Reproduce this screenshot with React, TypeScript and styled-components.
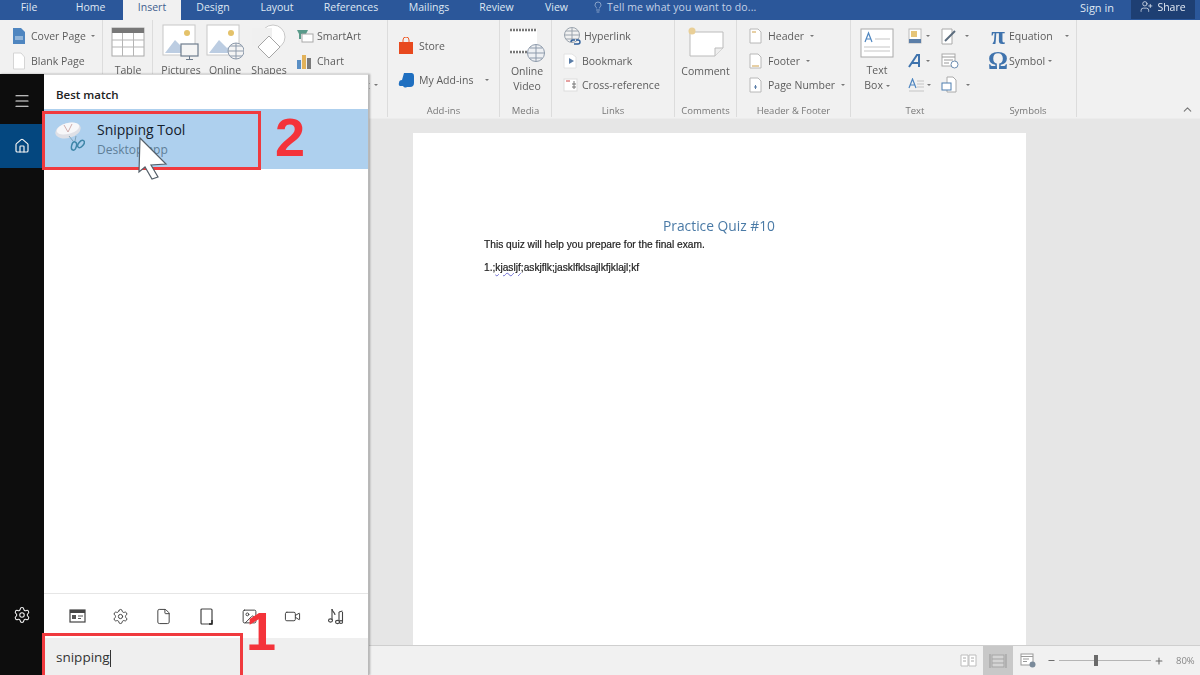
import React from "react";
import styled, { createGlobalStyle } from "styled-components";
import { Menu, Home, Settings, File, Image, Video, Lightbulb, UserPlus, ChevronUp, Minus, Plus } from "lucide-react";

const GlobalStyle = createGlobalStyle`
  html, body { margin: 0; padding: 0; background: #e6e6e6; }
  * { box-sizing: border-box; }
`;

const Page = styled.div`
  position: relative;
  width: 1200px;
  height: 675px;
  overflow: hidden;
  display: flex;
  flex-direction: column;
  font-family: "Open Sans", "Liberation Sans", sans-serif;
  color: #555;
  filter: blur(0.35px);
`;

const TabBar = styled.div`
  height: 20px;
  flex: none;
  background: #2b579a;
  display: flex;
  align-items: stretch;
`;

const Tab = styled.div<{ $w: number; $active?: boolean }>`
  width: ${(p) => p.$w}px;
  display: flex;
  align-items: center;
  justify-content: center;
  padding-bottom: 6px;
  font-size: 10.5px;
  color: ${(p) => (p.$active ? "#3f5f8f" : "#dfe7f3")};
  background: ${(p) => (p.$active ? "#f1f1f1" : "transparent")};
`;

const TellMe = styled.div`
  display: flex;
  align-items: center;
  gap: 3px;
  margin-left: 7px;
  padding-bottom: 6px;
  font-size: 10.5px;
  letter-spacing: 0.1px;
  color: #c3d1e6;
`;

const Spacer = styled.div`
  flex: 1;
`;

const SignIn = styled.div`
  display: flex;
  align-items: center;
  margin-right: 17px;
  padding-bottom: 6px;
  font-size: 11px;
  color: #dfe7f3;
`;

const ShareBox = styled.div`
  width: 64px;
  height: 19px;
  margin-right: 5px;
  padding-bottom: 6px;
  background: #1e3f73;
  display: flex;
  align-items: center;
  justify-content: center;
  gap: 4px;
  font-size: 10.5px;
  color: #e6ecf5;
`;

const Ribbon = styled.div`
  height: 98px;
  flex: none;
  background: #f1f1f1;
  display: flex;
  position: relative;
`;

const Group = styled.section<{ $w: number; $noLine?: boolean }>`
  width: ${(p) => p.$w}px;
  flex: none;
  display: flex;
  flex-direction: column;
  padding-top: 4px;
  margin: 0;
  border-right: 1px solid ${(p) => (p.$noLine ? "transparent" : "#dcdcdc")};
  height: 97px;
`;

const GroupBody = styled.div<{ $pad?: number; $gap?: number }>`
  flex: 1;
  display: flex;
  padding-left: ${(p) => p.$pad ?? 0}px;
  gap: ${(p) => p.$gap ?? 0}px;
`;

const GroupLabel = styled.div`
  height: 12px;
  line-height: 12px;
  text-align: center;
  font-size: 9.5px;
  color: #777;
`;

const Col = styled.div<{ $top?: number; $gap?: number; $ml?: number }>`
  display: flex;
  flex-direction: column;
  padding-top: ${(p) => p.$top ?? 0}px;
  gap: ${(p) => p.$gap ?? 0}px;
  margin-left: ${(p) => p.$ml ?? 0}px;
`;

const SmallBtn = styled.div<{ $gap?: number; $pad?: number }>`
  height: 24.4px;
  display: flex;
  align-items: center;
  gap: ${(p) => p.$gap ?? 3}px;
  padding-left: ${(p) => p.$pad ?? 0}px;
  font-size: 10.5px;
  color: #5c5c5c;
  white-space: nowrap;
`;

const LargeBtn = styled.div<{ $w: number; $top?: number }>`
  width: ${(p) => p.$w}px;
  display: flex;
  flex-direction: column;
  align-items: center;
  padding-top: ${(p) => p.$top ?? 0}px;
  font-size: 10.5px;
  line-height: 15px;
  color: #5c5c5c;
  text-align: center;
`;

const BtnLabel = styled.span<{ $mt?: number }>`
  margin-top: ${(p) => p.$mt ?? 0}px;
`;

const Caret = styled.span<{ $gap?: number }>`
  width: 0;
  height: 0;
  margin-left: ${(p) => p.$gap ?? 0}px;
  border-left: 2px solid transparent;
  border-right: 2px solid transparent;
  border-top: 2px solid #777;
  display: inline-block;
  vertical-align: middle;
`;

const Collapse = styled.div`
  position: absolute;
  right: 6px;
  bottom: 2px;
  color: #777;
  display: flex;
`;

const DocArea = styled.div`
  flex: 1;
  min-height: 0;
  background: #e6e6e6;
  padding: 14px 0 0 413px;
  border-top: 1px solid #ececec;
`;

const Sheet = styled.div`
  width: 613px;
  height: 100%;
  background: #fff;
  padding: 84px 72px 0 71px;
  color: #222;
  font-family: "Liberation Sans", Carlito, sans-serif;
`;

const DocTitle = styled.div`
  font-family: "Open Sans", sans-serif;
  text-align: center;
  font-size: 13.8px;
  line-height: 18px;
  color: #4a7aa6;
`;

const DocLine = styled.div<{ $mt: number }>`
  margin-top: ${(p) => p.$mt}px;
  font-size: 10.2px;
  line-height: 12px;
  -webkit-text-stroke: 0.2px #222;
`;

const Squiggle = styled.span`
  text-decoration: underline wavy #6b6bd0 1px;
`;

const StatusBar = styled.div`
  height: 30px;
  flex: none;
  background: #f1f1f1;
  border-top: 1px solid #cfcfcf;
  display: flex;
  align-items: stretch;
  justify-content: flex-end;
  color: #6a6a6a;
`;

const ViewBtn = styled.div<{ $w: number; $active?: boolean }>`
  width: ${(p) => p.$w}px;
  display: flex;
  align-items: center;
  justify-content: center;
  background: ${(p) => (p.$active ? "#c8c8c8" : "transparent")};
`;

const Zoomer = styled.div`
  display: flex;
  align-items: center;
  width: 129px;
  gap: 3px;
  margin-left: 4px;
`;

const SliderTrack = styled.div`
  position: relative;
  width: 92px;
  height: 1px;
  background: #b5b5b5;
`;

const SliderThumb = styled.div`
  position: absolute;
  left: 35px;
  top: -5px;
  width: 4px;
  height: 11px;
  background: #6a6a6a;
`;

const ZoomValue = styled.div`
  width: 24px;
  display: flex;
  align-items: center;
  font-size: 9.5px;
  color: #888;
`;

/* Start menu, floats over the word window */
const StartMenu = styled.div`
  position: absolute;
  left: 0;
  top: 74px;
  bottom: 0;
  width: 369px;
  display: flex;
  box-shadow: 1px 0 2px rgba(0, 0, 0, 0.3);
`;

const Rail = styled.div`
  width: 44px;
  flex: none;
  background: #0d0d0d;
  color: #f2f2f2;
  display: flex;
  flex-direction: column;
  align-items: stretch;
`;

const RailBtn = styled.div<{ $h: number; $active?: boolean; $top?: number }>`
  height: ${(p) => p.$h}px;
  padding-top: ${(p) => p.$top ?? 0}px;
  display: flex;
  align-items: center;
  justify-content: center;
  background: ${(p) => (p.$active ? "#04477f" : "transparent")};
`;

const Panel = styled.div`
  flex: 1;
  background: #fff;
  display: flex;
  flex-direction: column;
  border-top: 1px solid #d8d8d8;
  border-right: 1px solid #b9b9b9;
`;

const PanelHead = styled.div`
  height: 34px;
  flex: none;
  padding: 11px 0 0 12px;
  font-size: 11.5px;
  font-weight: 600;
  line-height: 17px;
  color: #222;
`;

const ResultRow = styled.div`
  height: 60px;
  flex: none;
  background: #aed0ee;
  display: flex;
  padding: 10px 0 0 11px;
  gap: 12px;
`;

const SnipBox = styled.div`
  padding-top: 2px;
  display: flex;
`;

const ResultText = styled.div`
  display: flex;
  flex-direction: column;
`;

const ResultName = styled.div`
  font-size: 14px;
  line-height: 22px;
  color: #14202c;
  font-weight: 500;
`;

const ResultSub = styled.div`
  font-size: 12px;
  line-height: 17px;
  color: #5f7f98;
`;

const PanelGap = styled.div`
  flex: 1;
`;

const FilterRow = styled.div`
  height: 45px;
  flex: none;
  border-top: 1px solid #e6e6e6;
  display: flex;
  align-items: center;
  padding-left: 22px;
  gap: 21px;
  color: #444;
`;

const FilterIcon = styled.div`
  width: 22px;
  display: flex;
  justify-content: center;
`;

const SearchBox = styled.div`
  height: 37px;
  flex: none;
  background: #efefef;
  padding: 9px 0 0 12px;
  font-size: 13.5px;
  line-height: 20px;
  color: #333;
  display: flex;
  align-items: flex-start;
`;

const Caretline = styled.span`
  width: 1px;
  height: 17px;
  margin-top: 3px;
  background: #333;
`;

const RedBox = styled.div<{ $l: number; $t: number; $w: number; $h: number }>`
  position: absolute;
  left: ${(p) => p.$l}px;
  top: ${(p) => p.$t}px;
  width: ${(p) => p.$w}px;
  height: ${(p) => p.$h}px;
  border: 3px solid #f03a3e;
`;

const RedNumber = styled.div<{ $l: number; $t: number }>`
  position: absolute;
  left: ${(p) => p.$l}px;
  top: ${(p) => p.$t}px;
  font-family: "Liberation Sans", Arial, sans-serif;
  font-weight: 700;
  font-size: 54px;
  line-height: 54px;
  color: #f4333a;
`;

const CursorWrap = styled.svg`
  position: absolute;
  left: 138px;
  top: 137px;
`;

const CoverIcon = () => (
  <svg width="14" height="18" viewBox="0 0 14 18">
    <path d="M1 1h8l4 4v12H1z" fill="#4f86c0" />
    <path d="M3 10h8M3 12h8" stroke="#d6e4f2" strokeWidth="1" />
  </svg>
);
const BlankIcon = () => (
  <svg width="14" height="18" viewBox="0 0 14 18">
    <path d="M1.5 1h7.5l3.5 4v12h-11z" fill="#fff" stroke="#d5d5d5" />
  </svg>
);
const TableIcon = () => (
  <svg width="34" height="30" viewBox="0 0 34 30">
    <rect x="1" y="1" width="32" height="28" fill="#fff" stroke="#aaa" />
    <rect x="1" y="1" width="32" height="5" fill="#777" />
    <path d="M1 13h32M1 20h32M11.5 6v23M22.5 6v23" stroke="#b5b5b5" fill="none" />
  </svg>
);
const PictureIcon = ({ web }: { web?: boolean }) => (
  <svg width="38" height="36" viewBox="0 0 38 36">
    <rect x="1" y="1" width="32" height="30" fill="#fff" stroke="#c8c8c8" />
    <circle cx="25" cy="9" r="3" fill="#e4c26a" />
    <path d="M3 29l10-13 8 8 4-3 6 8z" fill="#bccde2" />
    {web ? (
      <g fill="#f4f4f4" stroke="#8d9aab">
        <circle cx="30" cy="27" r="8" />
        <path d="M22 27h16M30 19v16M24 22h12M24 32h12" fill="none" />
      </g>
    ) : (
      <g>
        <rect x="19" y="20" width="17" height="12" fill="#f5f5f5" stroke="#6e7d8e" strokeWidth="1.2" />
        <path d="M27.5 32v3M24 35.5h7" stroke="#6e7d8e" />
      </g>
    )}
  </svg>
);
const ShapesIcon = () => (
  <svg width="36" height="36" viewBox="0 0 36 36">
    <circle cx="22" cy="13" r="12" fill="#fff" stroke="#c8c8c8" />
    <rect x="1" y="4" width="20" height="18" fill="#f0f0f0" />
    <path d="M18 12l11 11-11 11-11-11z" fill="#fff" stroke="#a5a5a5" />
  </svg>
);
const SmartArtIcon = () => (
  <svg width="18" height="14" viewBox="0 0 18 14">
    <path d="M1 1h11l-2 4H3z" fill="#5a9a8a" />
    <rect x="6" y="5" width="11" height="8" fill="#fff" stroke="#aaa" />
    <path d="M4 5v5" stroke="#5a9a8a" strokeWidth="2" />
  </svg>
);
const ChartIcon = () => (
  <svg width="16" height="16" viewBox="0 0 16 16">
    <rect x="1" y="7" width="4" height="9" fill="#5a8fc5" />
    <rect x="6" y="2" width="4" height="14" fill="#e2b25a" />
    <rect x="11" y="5" width="4" height="11" fill="#7a7a7a" />
  </svg>
);
const StoreIcon = () => (
  <svg width="16" height="18" viewBox="0 0 16 18">
    <path d="M5 5V3a3 3 0 0 1 6 0v2" fill="none" stroke="#ee5a28" />
    <rect x="1" y="5" width="14" height="12" fill="#e8491e" />
  </svg>
);
const AddinsIcon = () => (
  <svg width="17" height="17" viewBox="0 0 17 17">
    <path d="M6 1h8a3 3 0 0 1 2 3v7a4 4 0 0 1-4 4H9a3 3 0 0 1-4-1H3a2 2 0 0 1-2-3 3 3 0 0 1 3-3z" fill="#1f6fc0" />
  </svg>
);
const VideoIcon = () => (
  <svg width="36" height="36" viewBox="0 0 36 36">
    <rect x="1" y="1" width="27" height="24" fill="#fff" />
    <path d="M1 2h27M1 24h27" stroke="#777" strokeWidth="2.5" strokeDasharray="2 1" />
    <g fill="#eef0f3" stroke="#8d9aab">
      <circle cx="27" cy="25" r="8.5" />
      <path d="M18.5 25h17M27 16.5v17M21 20h12M21 30h12" fill="none" />
    </g>
  </svg>
);
const LinkIcon = () => (
  <svg width="18" height="18" viewBox="0 0 18 18">
    <g fill="none" stroke="#9aa3ad">
      <circle cx="9" cy="8" r="7.5" />
      <path d="M1 8h16M9 1v14M3 4h12M3 12h12" />
    </g>
    <path d="M8 15a2 2 0 0 1 2-2h2M13 13h2a2 2 0 0 1 0 4h-4" fill="none" stroke="#2f5f9a" strokeWidth="1.4" />
  </svg>
);
const BookmarkIcon = () => (
  <svg width="14" height="16" viewBox="0 0 14 16">
    <path d="M1 1h8l4 3v11H1z" fill="#fff" stroke="#e2e2e2" />
    <path d="M6 5l5 3-5 3z" fill="#5b7ea8" />
  </svg>
);
const CrossRefIcon = () => (
  <svg width="16" height="16" viewBox="0 0 16 16">
    <rect x="1" y="2" width="13" height="12" fill="#fff" stroke="#ddd" />
    <path d="M3 4h4" stroke="#c44" />
    <path d="M11 4v8M9 10h4M9 7h4" stroke="#777" />
  </svg>
);
const CommentIcon = () => (
  <svg width="38" height="30" viewBox="0 0 38 30">
    <path d="M3 5h33v16l-8 8H3z" fill="#fff" stroke="#bbb" />
    <path d="M28 29v-8h8" fill="#eee" stroke="#bbb" />
    <circle cx="5" cy="4" r="3.5" fill="#e9cf97" />
  </svg>
);
const HeaderIcon = ({ mark }: { mark: "top" | "bottom" | "num" }) => (
  <svg width="13" height="16" viewBox="0 0 13 16">
    <path d="M1 1h8l3 3v11H1z" fill="#fff" stroke="#b8b8b8" />
    {mark === "top" && <path d="M3 4h4" stroke="#d0a14a" />}
    {mark === "bottom" && <path d="M3 13h7" stroke="#d0a14a" />}
    {mark === "num" && <path d="M5 10h3M6.5 8v4" stroke="#5b7ea8" />}
  </svg>
);
const TextBoxIcon = () => (
  <svg width="34" height="30" viewBox="0 0 34 30">
    <rect x="1" y="1" width="32" height="28" fill="#fff" stroke="#aaa" />
    <path d="M5 14l3.5-9 3.5 9M6.5 11h4" fill="none" stroke="#4f86c0" strokeWidth="1.2" />
    <path d="M15 11h15M4 19h26M4 23h26" stroke="#c5c5c5" />
  </svg>
);
const QuickPartsIcon = () => (
  <svg width="14" height="16" viewBox="0 0 14 16">
    <rect x="1" y="1" width="12" height="14" fill="#fff" stroke="#bbb" />
    <rect x="3" y="3" width="6" height="6" fill="#e6c579" />
    <rect x="1" y="11" width="12" height="4" fill="#5b7ea8" />
  </svg>
);
const WordArtIcon = () => (
  <svg width="14" height="14" viewBox="0 0 14 14">
    <path d="M1 13L9 1h2v12M4 9h7" fill="none" stroke="#3f73ad" strokeWidth="2" />
  </svg>
);
const DropCapIcon = () => (
  <svg width="17" height="14" viewBox="0 0 17 14">
    <path d="M1 10l3.5-9L8 10M2.5 7h4" fill="none" stroke="#4f86c0" strokeWidth="1.2" />
    <path d="M9 3h7M9 6h7M9 9h7M1 13h15" stroke="#c5c5c5" />
  </svg>
);
const SignatureIcon = () => (
  <svg width="16" height="17" viewBox="0 0 16 17">
    <path d="M1 1h10v15H1z" fill="#fff" stroke="#aaa" />
    <path d="M4 13L14 3" stroke="#5a6b7d" strokeWidth="2" />
  </svg>
);
const DateIcon = () => (
  <svg width="18" height="16" viewBox="0 0 18 16">
    <rect x="1" y="1" width="13" height="12" fill="#fff" stroke="#aaa" />
    <path d="M1 4h13M3 7h9M3 10h5" stroke="#999" />
    <circle cx="13.5" cy="11.5" r="3.5" fill="#fff" stroke="#6d8db0" />
  </svg>
);
const ObjectIcon = () => (
  <svg width="17" height="17" viewBox="0 0 17 17">
    <path d="M6 1h6l3 3v12H6z" fill="#fff" stroke="#aaa" />
    <rect x="1" y="7" width="9" height="7" fill="#fff" stroke="#4f7fb0" />
  </svg>
);

const SymbolGlyph = styled.span`
  font-family: "Liberation Serif", serif;
  font-size: 25px;
  font-weight: 700;
  line-height: 20px;
  width: 16px;
  display: flex;
  justify-content: center;
  color: #3f73ad;
`;

const ReadIcon = () => (
  <svg width="17" height="13" viewBox="0 0 17 13">
    <path d="M1 1h7v11H1zM9 1h7v11H9z" fill="#fff" stroke="#bdbdbd" />
    <path d="M3 4h3M3 7h3M11 4h3M11 7h3" stroke="#aaa" />
  </svg>
);
const PrintIcon = () => (
  <svg width="18" height="14" viewBox="0 0 18 14">
    <path d="M1 0v14M17 0v14" stroke="#999" />
    <rect x="3" y="1" width="12" height="12" fill="#d4d4d4" stroke="#a5a5a5" />
    <path d="M3 5h12M3 9h12" stroke="#a5a5a5" />
  </svg>
);
const WebIcon = () => (
  <svg width="16" height="15" viewBox="0 0 16 15">
    <rect x="1" y="1" width="12" height="11" fill="#fff" stroke="#999" />
    <path d="M1 3.5h12M3 6h6M3 8.5h4" stroke="#999" />
    <circle cx="12.5" cy="11.5" r="3" fill="#7a8a9a" />
  </svg>
);

const SnipIcon = () => (
  <svg width="30" height="32" viewBox="0 0 30 32">
    <ellipse cx="13" cy="9.5" rx="13" ry="7.5" transform="rotate(-15 13 9.5)" fill="#dfe0e6" />
    <ellipse cx="13" cy="7.5" rx="11.5" ry="5.5" transform="rotate(-15 13 7.5)" fill="#f7f7f9" />
    <path d="M9 4l4 7 4-8" fill="none" stroke="#c9a3a3" strokeWidth="0.9" />
    <path d="M14 15l4 5M21 15l-1 5" stroke="#7d9db0" strokeWidth="0.9" />
    <ellipse cx="19" cy="25" rx="2.4" ry="4.2" transform="rotate(15 19 25)" fill="none" stroke="#3f86a8" strokeWidth="1.5" />
    <ellipse cx="26" cy="23" rx="2.4" ry="4.2" transform="rotate(40 26 23)" fill="none" stroke="#3f86a8" strokeWidth="1.5" />
  </svg>
);

const NewsIcon = () => (
  <svg width="17" height="14" viewBox="0 0 17 14">
    <rect x="1" y="1" width="15" height="12" fill="none" stroke="#444" strokeWidth="1.2" />
    <rect x="1" y="1" width="15" height="3" fill="#444" />
    <rect x="3" y="6" width="4" height="4" fill="#555" />
    <path d="M9 7h5M9 9.5h3" stroke="#555" />
  </svg>
);
const TabletIcon = () => (
  <svg width="13" height="17" viewBox="0 0 13 17">
    <rect x="1" y="1" width="11" height="15" rx="1" fill="none" stroke="#444" strokeWidth="1.2" />
    <path d="M12 12v4H9" fill="none" stroke="#222" strokeWidth="1.4" />
  </svg>
);
const NotesIcon = () => (
  <svg width="17" height="17" viewBox="0 0 17 17">
    <g fill="none" stroke="#444" strokeWidth="1.1">
      <path d="M5 1v11M12 4v9M15.5 4v9" />
      <path d="M5 1c0 3 3 3 3 6M12 4l3.5-1" />
      <ellipse cx="3.5" cy="12.5" rx="2" ry="1.6" />
      <ellipse cx="10.5" cy="14" rx="2" ry="1.6" />
      <ellipse cx="14" cy="14" rx="1.6" ry="1.4" />
    </g>
  </svg>
);

export default function App() {
  return (
    <Page>
      <GlobalStyle />
      <TabBar>
        <Tab $w={58}>File</Tab>
        <Tab $w={65}>Home</Tab>
        <Tab $w={58} $active>Insert</Tab>
        <Tab $w={64}>Design</Tab>
        <Tab $w={64}>Layout</Tab>
        <Tab $w={84}>References</Tab>
        <Tab $w={72}>Mailings</Tab>
        <Tab $w={63}>Review</Tab>
        <Tab $w={57}>View</Tab>
        <TellMe>
          <Lightbulb size={12} strokeWidth={1.2} />
          Tell me what you want to do...
        </TellMe>
        <Spacer />
        <SignIn>Sign in</SignIn>
        <ShareBox>
          <UserPlus size={13} strokeWidth={1.4} />
          Share
        </ShareBox>
      </TabBar>

      <Ribbon>
        <Group $w={103}>
          <GroupBody $pad={12}>
            <Col>
              <SmallBtn $gap={5}><CoverIcon />Cover Page<Caret /></SmallBtn>
              <SmallBtn $gap={5}><BlankIcon />Blank Page</SmallBtn>
            </Col>
          </GroupBody>
          <GroupLabel />
        </Group>
        <Group $w={50}>
          <GroupBody $pad={8}>
            <LargeBtn $w={34} $top={3}>
              <TableIcon />
              <BtnLabel $mt={6}>Table</BtnLabel>
            </LargeBtn>
          </GroupBody>
          <GroupLabel />
        </Group>
        <Group $w={235}>
          <GroupBody $pad={9} $gap={6}>
            <LargeBtn $w={38}><PictureIcon /><BtnLabel $mt={3}>Pictures</BtnLabel></LargeBtn>
            <LargeBtn $w={38}><PictureIcon web /><BtnLabel $mt={3}>Online</BtnLabel></LargeBtn>
            <LargeBtn $w={38}><ShapesIcon /><BtnLabel $mt={3}>Shapes</BtnLabel></LargeBtn>
            <Col $ml={2}>
              <SmallBtn><SmartArtIcon />SmartArt</SmallBtn>
              <SmallBtn $gap={5}><ChartIcon />Chart</SmallBtn>
              <SmallBtn $pad={19}>Screenshot<Caret $gap={1} /></SmallBtn>
            </Col>
          </GroupBody>
          <GroupLabel />
        </Group>
        <Group $w={112}>
          <GroupBody $pad={10}>
            <Col $top={10} $gap={9.5}>
              <SmallBtn $gap={5}><StoreIcon />Store</SmallBtn>
              <SmallBtn $gap={4}><AddinsIcon />My Add-ins<Caret $gap={8} /></SmallBtn>
            </Col>
          </GroupBody>
          <GroupLabel>Add-ins</GroupLabel>
        </Group>
        <Group $w={52}>
          <GroupBody $pad={9}>
            <LargeBtn $w={36} $top={4}><VideoIcon /><span>Online<br />Video</span></LargeBtn>
          </GroupBody>
          <GroupLabel>Media</GroupLabel>
        </Group>
        <Group $w={123}>
          <GroupBody $pad={11}>
            <Col>
              <SmallBtn><LinkIcon />Hyperlink</SmallBtn>
              <SmallBtn $gap={5}><BookmarkIcon />Bookmark</SmallBtn>
              <SmallBtn><CrossRefIcon />Cross-reference</SmallBtn>
            </Col>
          </GroupBody>
          <GroupLabel>Links</GroupLabel>
        </Group>
        <Group $w={62}>
          <GroupBody>
            <LargeBtn $w={62} $top={3}>
              <CommentIcon />
              <BtnLabel $mt={7}>Comment</BtnLabel>
            </LargeBtn>
          </GroupBody>
          <GroupLabel>Comments</GroupLabel>
        </Group>
        <Group $w={114}>
          <GroupBody $pad={12}>
            <Col>
              <SmallBtn $gap={6}><HeaderIcon mark="top" />Header<Caret /></SmallBtn>
              <SmallBtn $gap={6}><HeaderIcon mark="bottom" />Footer<Caret /></SmallBtn>
              <SmallBtn $gap={6}><HeaderIcon mark="num" />Page Number<Caret /></SmallBtn>
            </Col>
          </GroupBody>
          <GroupLabel>Header &amp; Footer</GroupLabel>
        </Group>
        <Group $w={129} $noLine>
          <GroupBody $pad={9} $gap={10}>
            <LargeBtn $w={34} $top={4}>
              <TextBoxIcon />
              <BtnLabel $mt={5}>Text<br />Box <Caret /></BtnLabel>
            </LargeBtn>
            <Col $ml={4}>
              <SmallBtn $gap={4}><QuickPartsIcon /><Caret /></SmallBtn>
              <SmallBtn $gap={4}><WordArtIcon /><Caret /></SmallBtn>
              <SmallBtn $gap={2}><DropCapIcon /><Caret /></SmallBtn>
            </Col>
            <Col>
              <SmallBtn $gap={8}><SignatureIcon /><Caret /></SmallBtn>
              <SmallBtn><DateIcon /></SmallBtn>
              <SmallBtn $gap={8}><ObjectIcon /><Caret /></SmallBtn>
            </Col>
          </GroupBody>
          <GroupLabel>Text</GroupLabel>
        </Group>
        <Group $w={97}>
          <GroupBody $pad={10}>
            <Col>
              <SmallBtn $gap={3}><SymbolGlyph>π</SymbolGlyph>Equation<Caret $gap={9} /></SmallBtn>
              <SmallBtn $gap={3}><SymbolGlyph>Ω</SymbolGlyph>Symbol<Caret /></SmallBtn>
            </Col>
          </GroupBody>
          <GroupLabel>Symbols</GroupLabel>
        </Group>
        <Collapse><ChevronUp size={13} strokeWidth={2} /></Collapse>
      </Ribbon>

      <DocArea>
        <Sheet>
          <DocTitle>Practice Quiz #10</DocTitle>
          <DocLine $mt={4}>This quiz will help you prepare for the final exam.</DocLine>
          <DocLine $mt={11}>1.;<Squiggle>kjasljf</Squiggle>;askjflk;jasklfklsajlkfjklajl;kf</DocLine>
        </Sheet>
      </DocArea>

      <StatusBar>
        <ViewBtn $w={30}><ReadIcon /></ViewBtn>
        <ViewBtn $w={30} $active><PrintIcon /></ViewBtn>
        <ViewBtn $w={30}><WebIcon /></ViewBtn>
        <Zoomer>
          <Minus size={9} strokeWidth={2.6} />
          <SliderTrack><SliderThumb /></SliderTrack>
          <Plus size={10} strokeWidth={2.6} />
        </Zoomer>
        <ZoomValue>80%</ZoomValue>
      </StatusBar>

      <StartMenu>
        <Rail>
          <RailBtn $h={50} $top={4}><Menu size={18} strokeWidth={1.6} /></RailBtn>
          <RailBtn $h={44} $active><Home size={16} strokeWidth={1.8} /></RailBtn>
          <PanelGap />
          <RailBtn $h={120}><Settings size={18} strokeWidth={1.4} /></RailBtn>
        </Rail>
        <Panel>
          <PanelHead>Best match</PanelHead>
          <ResultRow>
            <SnipBox><SnipIcon /></SnipBox>
            <ResultText>
              <ResultName>Snipping Tool</ResultName>
              <ResultSub>Desktop app</ResultSub>
            </ResultText>
          </ResultRow>
          <PanelGap />
          <FilterRow>
            <FilterIcon><NewsIcon /></FilterIcon>
            <FilterIcon><Settings size={17} strokeWidth={1.4} /></FilterIcon>
            <FilterIcon><File size={17} strokeWidth={1.4} /></FilterIcon>
            <FilterIcon><TabletIcon /></FilterIcon>
            <FilterIcon><Image size={17} strokeWidth={1.4} /></FilterIcon>
            <FilterIcon><Video size={17} strokeWidth={1.4} /></FilterIcon>
            <FilterIcon><NotesIcon /></FilterIcon>
          </FilterRow>
          <SearchBox>snipping<Caretline /></SearchBox>
        </Panel>
      </StartMenu>

      <RedBox $l={42} $t={111} $w={219} $h={59} />
      <RedBox $l={42} $t={633} $w={201} $h={46} />
      <RedNumber $l={275} $t={110}>2</RedNumber>
      <RedNumber $l={246} $t={604}>1</RedNumber>

      <CursorWrap width="32" height="44" viewBox="0 0 32 44">
        <path d="M2 1L28 27 13 28 20 40 14 42 7 30 1 35z" fill="#fff" stroke="#55606a" strokeWidth="1.2" />
      </CursorWrap>
    </Page>
  );
}
